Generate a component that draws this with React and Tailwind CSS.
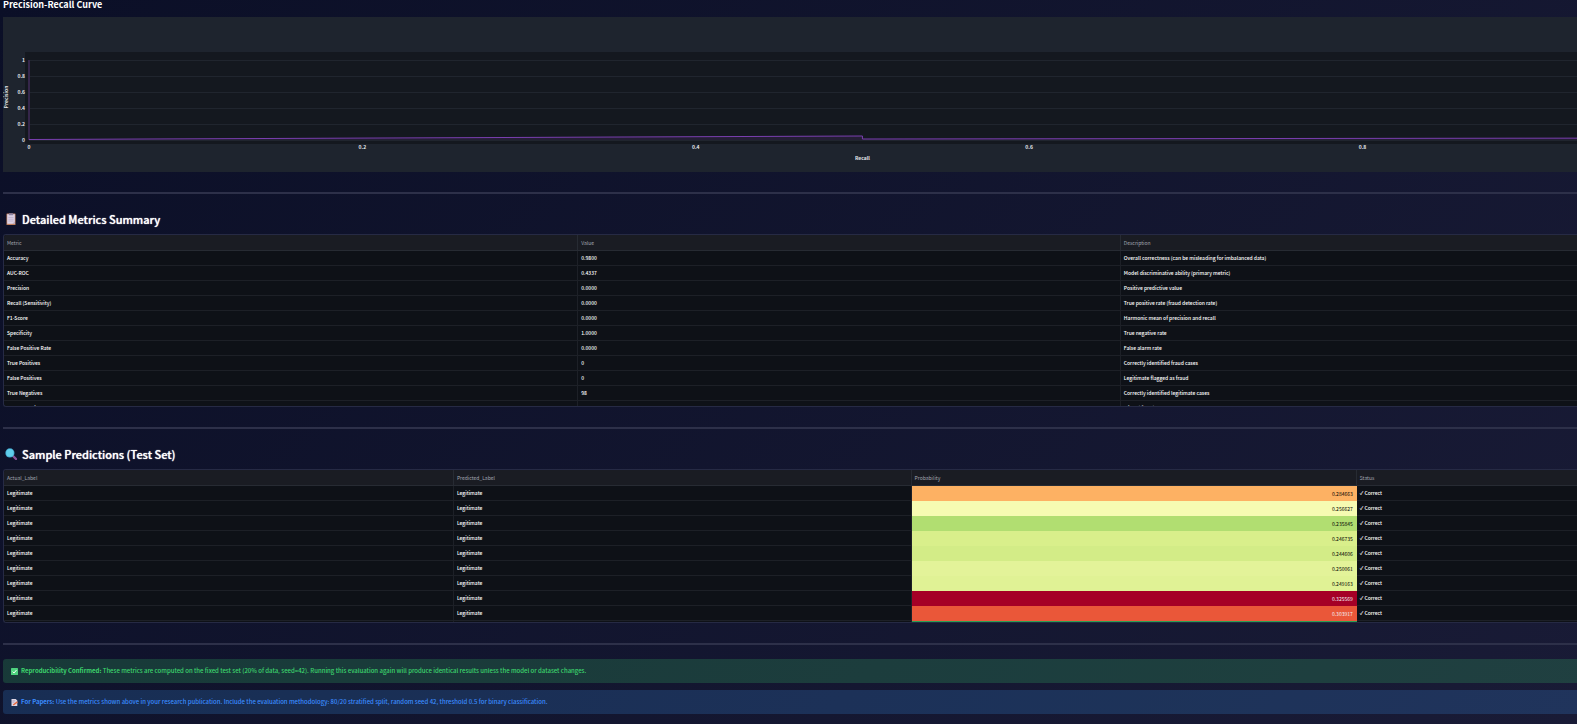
const FONT = "font-['Noto_Sans_CJK_SC','Noto_Sans',sans-serif]"

const metrics = [
  ['Accuracy', '0.9800', 'Overall correctness (can be misleading for imbalanced data)'],
  ['AUC-ROC', '0.4337', 'Model discriminative ability (primary metric)'],
  ['Precision', '0.0000', 'Positive predictive value'],
  ['Recall (Sensitivity)', '0.0000', 'True positive rate (fraud detection rate)'],
  ['F1-Score', '0.0000', 'Harmonic mean of precision and recall'],
  ['Specificity', '1.0000', 'True negative rate'],
  ['False Positive Rate', '0.0000', 'False alarm rate'],
  ['True Positives', '0', 'Correctly identified fraud cases'],
  ['False Positives', '0', 'Legitimate flagged as fraud'],
  ['True Negatives', '98', 'Correctly identified legitimate cases'],
  ['False Negatives', '2', 'Missed fraud cases'],
]

const predictions = [
  { probability: '0.284663', tone: 'bg-[#fdb163] text-black' },
  { probability: '0.256627', tone: 'bg-[#f6fbb2] text-black' },
  { probability: '0.235845', tone: 'bg-[#b1de71] text-black' },
  { probability: '0.246735', tone: 'bg-[#d9ef8b] text-black' },
  { probability: '0.244606', tone: 'bg-[#d3ec87] text-black' },
  { probability: '0.250061', tone: 'bg-[#e3f399] text-black' },
  { probability: '0.249163', tone: 'bg-[#e0f295] text-black' },
  { probability: '0.325569', tone: 'bg-[#a50026] text-gray-100' },
  { probability: '0.303917', tone: 'bg-[#ea5739] text-gray-100' },
  { probability: '0.208112', tone: 'bg-[#2aa054] text-gray-100' },
]

const yTicks = ['0', '0.2', '0.4', '0.6', '0.8', '1']
const xTicks = [
  { label: '0', x: '0%' },
  { label: '0.2', x: '20%' },
  { label: '0.4', x: '40%' },
  { label: '0.6', x: '60%' },
  { label: '0.8', x: '80%' },
]

function ClipboardIcon() {
  return (
    <svg viewBox="0 0 10 12" className="h-3 w-[10px]" aria-hidden="true">
      <rect x="0.5" y="0.5" width="9" height="11.5" rx="0.6" fill="#c07f5c" />
      <rect x="1.2" y="1.2" width="7.6" height="9.6" fill="#ddd3e6" />
      <rect x="2.8" y="0.3" width="4.4" height="2" rx="0.5" fill="#8d83a0" />
      <path d="M2.4 4.4h5.2M2.4 6.2h5.2M2.4 8h5.2" stroke="#b5a6c6" strokeWidth="0.7" />
      <path d="M6.4 10.8l2.4-2.4v2.4z" fill="#b9a3b8" />
    </svg>
  )
}

function SearchIcon() {
  return (
    <svg viewBox="0 0 12 12" className="h-3 w-3" aria-hidden="true">
      <path d="M8 8l3 3" stroke="#8b5196" strokeWidth="2.4" strokeLinecap="round" />
      <circle cx="4.9" cy="4.9" r="4.6" fill="#3f9fc4" />
      <circle cx="4.9" cy="4.9" r="3.8" fill="#5fcdec" />
    </svg>
  )
}

function CheckIcon() {
  return (
    <svg viewBox="0 0 7 7" className="h-[7px] w-[7px] shrink-0" aria-hidden="true">
      <rect width="7" height="7" rx="0.6" fill="#4fd37f" />
      <path d="M1.6 3.6l1.4 1.4 2.5-3" fill="none" stroke="#f0fff5" strokeWidth="1" />
    </svg>
  )
}

function MemoIcon() {
  return (
    <svg viewBox="0 0 7 7" className="h-[7px] w-[7px] shrink-0" aria-hidden="true">
      <path d="M0.5 0h4.2l1.6 1.6V7H0.5z" fill="#ddd5e4" />
      <path d="M1.4 1.8h2.8M1.4 3.2h2" stroke="#9a8ba8" strokeWidth="0.5" />
      <path d="M2.2 6L6.4 2.8" stroke="#e8693f" strokeWidth="1.5" />
    </svg>
  )
}

function PrecisionRecallChart() {
  return (
    <svg
      className="block h-[155px] w-full overflow-hidden bg-[#1e242e]"
      role="img"
      aria-label="Precision-Recall Curve"
    >
      <rect x="22" y="35" width="110%" height="92" fill="#14181f" />
      <g fontSize="5" fontWeight="700" fill="#e5e7eb">
        {yTicks.map((tick, i) => (
          <text key={tick} x="22" y={125 - i * 16} textAnchor="end">{tick}</text>
        ))}
      </g>
      <g stroke="#20252e" shapeRendering="crispEdges">
        {yTicks.map((tick, i) => (
          <line key={tick} x1="26" x2="110%" y1={123 - i * 16} y2={123 - i * 16} />
        ))}
      </g>
      <text
        transform="translate(5 80) rotate(-90)"
        textAnchor="middle"
        fontSize="5"
        fontWeight="700"
        fill="#e5e7eb"
      >
        Precision
      </text>

      {/* the recall axis runs on past the right edge of the panel */}
      <svg x="26" y="43" width="105.9%" height="112" overflow="visible">
        <svg width="100%" height="80" viewBox="0 0 100 80" preserveAspectRatio="none" overflow="visible">
          <path d="M0 80L50 76V79L100 78V80z" fill="#9b4dd8" fillOpacity="0.12" />
          <path d="M0 0V80" stroke="#35264a" strokeWidth="2" vectorEffect="non-scaling-stroke" />
          <path
            d="M0 79.500L50 76V79L100 78"
            fill="none"
            stroke="#7a3fb0"
            strokeWidth="1"
            vectorEffect="non-scaling-stroke"
          />
        </svg>
        <g fontSize="5" fontWeight="700" fill="#e5e7eb" textAnchor="middle">
          {xTicks.map(({ label, x }) => (
            <text key={label} x={x} y="89">{label}</text>
          ))}
          <text x="50%" y="100">Recall</text>
        </g>
      </svg>
    </svg>
  )
}

function Divider() {
  return <hr className="mt-5 h-[2px] border-0 bg-[#2d3049]" />
}

function SectionHeading({ icon, children }) {
  return (
    <h2 className="mt-[15px] mb-[5px] flex h-5 items-center text-[11px] leading-5 font-medium text-white text-shadow-[0_0_1px_#fff]">
      <span className="flex w-[19px] justify-center pr-1">{icon}</span>
      {children}
    </h2>
  )
}

function HeaderCell({ children }) {
  return (
    <th className="h-4 border-r border-b border-[#272b33] bg-[#1a1c23] p-0 px-[3px] text-left font-normal text-[#a3a7b2] last:border-r-0">
      {children}
    </th>
  )
}

function Cell({ children }) {
  return (
    <td className="h-[15px] border-r border-b border-[#1d2027] p-0 px-[3px] font-medium whitespace-nowrap last:border-r-0">
      {children}
    </td>
  )
}

function MetricsTable() {
  return (
    <div className="h-[173px] overflow-hidden rounded-l-[3px] border border-r-0 border-[#262a44] bg-[#0e1117]">
      <table className="w-full table-fixed border-separate border-spacing-0 text-[5px] leading-[14px] text-white">
        <colgroup>
          <col className="w-[36.5%]" />
          <col className="w-[34.5%]" />
          <col />
        </colgroup>
        <thead>
          <tr>
            <HeaderCell>Metric</HeaderCell>
            <HeaderCell>Value</HeaderCell>
            <HeaderCell>Description</HeaderCell>
          </tr>
        </thead>
        <tbody>
          {metrics.map(([name, value, description]) => (
            <tr key={name}>
              <Cell>{name}</Cell>
              <Cell>{value}</Cell>
              <Cell>{description}</Cell>
            </tr>
          ))}
        </tbody>
      </table>
    </div>
  )
}

function PredictionsTable() {
  return (
    <div className="h-[154px] overflow-hidden rounded-l-[3px] border border-r-0 border-[#262a44] bg-[#0e1117]">
      <table className="w-full table-fixed border-separate border-spacing-0 text-[5px] leading-[14px] text-white">
        <colgroup>
          <col className="w-[28.6%]" />
          <col className="w-[29.1%]" />
          <col className="w-[28.3%]" />
          <col />
        </colgroup>
        <thead>
          <tr>
            <HeaderCell>Actual_Label</HeaderCell>
            <HeaderCell>Predicted_Label</HeaderCell>
            <HeaderCell>Probability</HeaderCell>
            <HeaderCell>Status</HeaderCell>
          </tr>
        </thead>
        <tbody>
          {predictions.map(({ probability, tone }) => (
            <tr key={probability}>
              <Cell>Legitimate</Cell>
              <Cell>Legitimate</Cell>
              <td className={`h-[15px] p-0 px-1 text-right ${tone}`}>{probability}</td>
              <Cell>✓ Correct</Cell>
            </tr>
          ))}
        </tbody>
      </table>
    </div>
  )
}

function App() {
  return (
    <div className={`min-h-screen overflow-hidden bg-linear-135 from-[#0b0f27] to-[#191b36] pl-[3px] ${FONT}`}>
      <h3 className="mb-[7px] text-[9px] leading-[10px] font-bold text-white">Precision-Recall Curve</h3>
      <PrecisionRecallChart />

      <Divider />
      <SectionHeading icon={<ClipboardIcon />}>Detailed Metrics Summary</SectionHeading>
      <MetricsTable />

      <Divider />
      <SectionHeading icon={<SearchIcon />}>Sample Predictions (Test Set)</SectionHeading>
      <PredictionsTable />

      <Divider />
      <div className="mt-[14px] flex h-6 items-center gap-[3px] rounded-l-[3px] bg-[#3dd56d]/20 pl-2 text-[6px] leading-[10px] text-[#3dd56d]">
        <CheckIcon />
        <p className="font-medium">
          <strong className="font-bold">Reproducibility Confirmed:</strong> These metrics are computed on the fixed test
          set (20% of data, seed=42). Running this evaluation again will produce identical results unless the model or
          dataset changes.
        </p>
      </div>
      <div className="mt-[7px] flex h-6 items-center gap-[3px] rounded-l-[3px] bg-[#3d9df3]/20 pl-2 text-[6px] leading-[10px] text-[#3b8cff]">
        <MemoIcon />
        <p className="font-medium">
          <strong className="font-bold">For Papers:</strong> Use the metrics shown above in your research publication.
          Include the evaluation methodology: 80/20 stratified split, random seed 42, threshold 0.5 for binary
          classification.
        </p>
      </div>
    </div>
  )
}

export default App
